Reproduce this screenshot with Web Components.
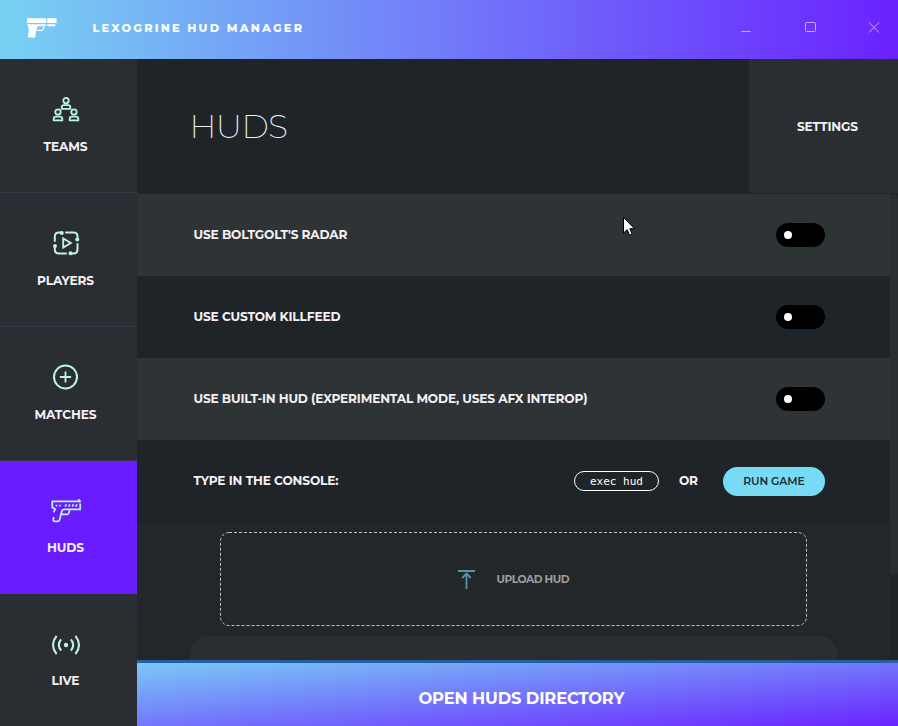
<!DOCTYPE html>
<html lang="en">
<head>
<meta charset="utf-8">
<title>Lexogrine HUD Manager</title>
<style>
body { margin: 0; background: #23272a; }
</style>
</head>
<body>
<hud-app></hud-app>
<script>
const define = (name, html, setup) => {
  const t = document.createElement('template');
  t.innerHTML = html;
  customElements.define(name, class extends HTMLElement {
    connectedCallback() {
      if (this.shadowRoot) return;
      this.attachShadow({ mode: 'open' }).appendChild(t.content.cloneNode(true));
      if (setup) setup(this, this.shadowRoot);
    }
  });
};

// A single-line label tracked so that its glyphs span the "span" attribute, in pixels.
define('ui-label', `
<style>
:host { display: inline-block; white-space: nowrap; flex: none; }
span { display: inline-block; }
</style><span><slot></slot></span>`, (el, root) => {
  const target = +el.getAttribute('span');
  const s = root.querySelector('span');
  const n = el.textContent.trim().length;
  const ls = (target - s.getBoundingClientRect().width) / (n - 1);
  s.style.letterSpacing = ls + 'px';
  s.style.marginRight = -ls + 'px';
});

const icons = {
  teams: `<svg width="28" height="27" viewBox="0 0 28 27"><g stroke-width="1.8" transform="translate(0 -.4)"><circle cx="14" cy="4" r="2.7"/><path d="M9.7 12.3v-1.4q0-2.3 2.3-2.3h4q2.3 0 2.3 2.3v1.4z"/><circle cx="6" cy="15.4" r="2.7"/><path d="M1.7 23.7v-1.4q0-2.3 2.3-2.3h4q2.3 0 2.3 2.3v1.4z"/><circle cx="22" cy="15.4" r="2.7"/><path d="M17.7 23.7v-1.4q0-2.3 2.3-2.3h4q2.3 0 2.3 2.3v1.4z"/></g></svg>`,
  players: `<svg width="28" height="27" viewBox="0 0 28 27"><g transform="translate(0 -.5)"><g stroke-width="2"><path d="M2.8 11.2V6.3q0-4.3 4.3-4.3h2"/><path d="M13.2 2h8.3q4 0 4 4v2.3"/><path d="M25.5 12.8v6q0 4.2-4.2 4.2h-1.8"/><path d="M14.8 23H7q-4.2 0-4.2-4.2V16"/><path d="M11.2 7.9v9.2l7.6-4.6z" stroke-width="1.9"/></g><g fill="#bdf5de" stroke="none"><circle cx="9.8" cy="2.4" r="2"/><circle cx="25.3" cy="9" r="2"/><circle cx="18.5" cy="22.8" r="2"/><circle cx="3" cy="15.5" r="2"/></g></g></svg>`,
  matches: `<svg width="28" height="27" viewBox="0 0 28 27"><g transform="translate(0 -.6)"><circle cx="13.5" cy="12.6" r="11.5" stroke-width="2"/><path d="M13.5 7v11.2M7.9 12.6h11.2" stroke-width="1.8"/></g></svg>`,
  huds: `<svg width="32" height="27" viewBox="0 0 32 27"><g transform="translate(0 -2)"><path d="M28.9 2v2.3H2.3v6.1l2.9 1.7-1.6 3.3" stroke-width="1.7"/><path d="M30.2 3.5v1M30.2 6.6v5.6M28.9 4.3h2" stroke-width="1.7"/><path d="M31 12.3H14.2q-2 0-2.4 2L9.6 22.8q-.4 1.6-2 1.6H5.1q-2.4 0-1.8-2.4l.6-2.1M11.8 17.3h5.4q1.1 0 1.5-1.1l1.2-3.9" stroke-width="1.7"/><path d="M5.6 8.6h1.7M9 8.6h1.7M15.2 9.7l1.2-2.3M18.7 9.7l1.2-2.3M22.2 9.7l1.2-2.3M25.7 9.7l1.2-2.3" stroke-width="1.7"/></g></svg>`,
  live: `<svg width="30" height="27" viewBox="0 0 30 27"><g stroke-width="2.1" transform="translate(0 -.4)"><path d="M5.6 4.3Q-1.6 13.4 5.6 22.5"/><path d="M10.1 7.8Q5.5 13.4 10.1 19"/><path d="M24.4 4.3q7.2 9.1 0 18.2"/><path d="M19.9 7.8q4.6 5.6 0 11.2"/></g><circle cx="15" cy="13" r="2.2" fill="#bdf5de" stroke="none"/></svg>`
};

define('title-bar', `
<style>
:host { display: flex; height: 59px; align-items: center; background: linear-gradient(to right, #78d2f3, #6a22ff); color: #fff; box-sizing: border-box; padding-left: 26px; }
.logo { width: 32px; height: 24px; margin-bottom: 1px; }
ui-label { margin: -3px 0 0 34.5px; font: 800 11.3px/16px Montserrat, Inter, sans-serif; color: #f6fbff; }
.win { margin-left: auto; padding-right: 18px; display: flex; gap: 52px; height: 12px; margin-bottom: 3px; }
.win svg { width: 12px; height: 12px; fill: none; stroke: #cfabff; stroke-width: 1; }
</style>
<svg class="logo" viewBox="0 0 32 24"><g fill="#fff"><path d="M1 1.3h.8l.5-.8 1.2.8h16.8v4.8H1zM21.3 1.3h8l.4-.6.8.9v4.5h-9.2zM1.2 7.2h19.1v1.3H1.2zM21.3 7.2h8.3l-.5 2h-7.8zM2 8.3h10l-1.8 6.1-1.2 6.4-7.4-.6 1.2-6z"/><path d="M11.4 8.8h7l-1.4 3.6-1 1h-4.6" fill="none" stroke="#fff" stroke-width="1.1"/></g></svg>
<ui-label span="209.5">LEXOGRINE HUD MANAGER</ui-label>
<div class="win">
<svg><path d="M1.5 9.5H10.5"/></svg>
<svg><rect x="1.5" y=".5" width="10" height="9" rx="1"/></svg>
<svg><path d="M1 .5l10 10M11 .5L1 10.5"/></svg>
</div>`);

define('nav-item', `
<style>
:host { display: block; box-sizing: border-box; height: 134px; padding-top: 38px; text-align: center; border-bottom: 1px solid #343943; color: #f3f1f5; background: #2a2e32; font: 700 12.2px/18px Montserrat, Inter, sans-serif; }
:host([active]) { background: #691cff; border-bottom: 0; height: 133px; }
:host(:last-child) { border: 0; height: 132px; }
.icon { height: 27px; display: flex; justify-content: center; padding-right: 6px; margin-bottom: 14px; }
:host([active]) .icon, :host(:last-child) .icon { margin-bottom: 13px; }
.name { padding-right: 6px; }
svg { fill: none; stroke: #bdf5de; overflow: visible; }
</style><div class="icon"></div><div class="name"><slot></slot></div>`,
(el, root) => { root.querySelector('.icon').innerHTML = icons[el.getAttribute('icon')]; });

define('page-header', `
<style>
:host { display: flex; height: 135px; color: #f1f0f3; background: #1f2428; font-family: Montserrat, Inter, sans-serif; flex: none; }
.heading { flex: 1; padding: 45px 0 0 52.5px; font: 200 33px/44px Montserrat, Inter, sans-serif; }
.action { box-sizing: border-box; width: 149px; background: #2a2e32; border-bottom: 1px solid #202529; padding: 59px 0 0 48px; font: 700 12.2px/18px Montserrat, Inter, sans-serif; }
</style>
<div class="heading"><slot></slot></div>
<div class="action"><ui-label span="61">SETTINGS</ui-label></div>`);

define('option-row', `
<style>
:host { display: flex; box-sizing: border-box; height: 82px; align-items: center; justify-content: space-between; padding: 0 65px 0 56.5px; background: #1f2428; color: #f3f1f5; font: 700 12.2px/18px Montserrat, Inter, sans-serif; flex: none; }
:host(:nth-of-type(odd)) { background: #2e3336; }
.end { display: flex; align-items: center; }
</style><slot></slot><div class="end"><slot name="end"></slot></div>`);

define('toggle-switch', `
<style>
:host { display: flex; box-sizing: border-box; width: 49px; height: 24px; border-radius: 12px; background: #000; align-items: center; padding-left: 8px; }
i { width: 8px; height: 8px; border-radius: 50%; background: #fff; }
</style><i></i>`);

define('console-command', `<style>
:host { display: block; box-sizing: border-box; width: 85px; height: 20px; border: 1px solid #fff; border-radius: 10px; text-align: center; font: 11px/19px "DejaVu Sans Mono", monospace; color: #fff; }
</style><slot></slot>`);

define('pill-button', `
<style>
:host { display: flex; width: 102px; height: 29px; border-radius: 15px; background: #78dbf5; color: #202b32; align-items: center; justify-content: center; font: 600 10.8px/16px Montserrat, Inter, sans-serif; margin-top: 1px; }
</style><slot></slot>`);

define('upload-area', `
<style>
:host { display: flex; box-sizing: border-box; width: 587px; height: 94px; margin: 10px 0 10px 83px; padding: 0 0 0 237px; align-items: center; color: #9c9da0; font: 700 10.7px/16px Montserrat, Inter, sans-serif; flex: none; position: relative; }
.frame { position: absolute; inset: 0; }
.frame rect { fill: none; stroke: #bdc0c3; stroke-dasharray: 3 2; }
.arrow { margin-right: 21.5px; flex: none; }
::slotted(ui-label) { padding-top: 1px; }
</style>
<svg class="frame" width="587" height="94"><rect x=".5" y=".5" width="586" height="93" rx="8.5"/></svg>
<svg class="arrow" width="18" height="20" fill="none" stroke="#5097ac" stroke-width="2"><path d="M1 2h17"/><path d="M9.5 20V5M5.2 9l4.3-4.4L13.8 9" stroke-width="1.8"/></svg>
<slot></slot>`);

define('hud-app', `
<style>
:host { display: flex; flex-direction: column; width: 898px; height: 726px; overflow: hidden; position: relative; background: #23272a; }
.body { display: flex; flex: 1; min-height: 0; }
nav { width: 137px; flex: none; }
main { flex: 1; display: flex; flex-direction: column; min-width: 0; }
.scroll { display: flex; height: 466px; overflow: hidden; flex: none; }
.content { width: 753px; display: flex; flex-direction: column; }
.track { width: 8px; background: #1f2428; }
.thumb { height: 381px; background: #2a2e32; border-radius: 4px; }
.card { height: 60px; margin-left: 53px; width: 647px; background: #2a2e32; border-radius: 17px; flex: none; }
.open { box-sizing: border-box; height: 67px; flex: none; border-top: 3px solid #265f9f; background: linear-gradient(to bottom right, #7ac9f7, #6a22ff) padding-box; color: #fff; display: flex; align-items: center; justify-content: center; font: 700 16.3px/24px Montserrat, Inter, sans-serif; padding: 6px 0 0 8px; }
.or { margin: 0 25px 0 20px; }
.cursor { position: absolute; left: 622px; top: 216px; }
</style>
<title-bar></title-bar>
<div class="body">
<nav>
<nav-item icon="teams"><ui-label span="44">TEAMS</ui-label></nav-item>
<nav-item icon="players"><ui-label span="57">PLAYERS</ui-label></nav-item>
<nav-item icon="matches"><ui-label span="62">MATCHES</ui-label></nav-item>
<nav-item icon="huds" active><ui-label span="37">HUDS</ui-label></nav-item>
<nav-item icon="live"><ui-label span="28">LIVE</ui-label></nav-item>
</nav>
<main>
<page-header><ui-label span="98.5">HUDS</ui-label></page-header>
<div class="scroll">
<div class="content">
<option-row><ui-label span="154">USE BOLTGOLT'S RADAR</ui-label><toggle-switch slot="end"></toggle-switch></option-row>
<option-row><ui-label span="147">USE CUSTOM KILLFEED</ui-label><toggle-switch slot="end"></toggle-switch></option-row>
<option-row><ui-label span="394">USE BUILT-IN HUD (EXPERIMENTAL MODE, USES AFX INTEROP)</ui-label><toggle-switch slot="end"></toggle-switch></option-row>
<option-row><ui-label span="145">TYPE IN THE CONSOLE:</ui-label><console-command slot="end">exec hud</console-command><ui-label class="or" slot="end" span="19">OR</ui-label><pill-button slot="end"><ui-label span="61.5">RUN GAME</ui-label></pill-button></option-row>
<upload-area><ui-label span="73">UPLOAD HUD</ui-label></upload-area>
<div class="card"></div>
</div>
<div class="track"><div class="thumb"></div></div>
</div>
<div class="open"><ui-label span="206">OPEN HUDS DIRECTORY</ui-label></div>
</main>
</div>
<svg class="cursor" width="14" height="21" viewBox="0 0 14 21"><path d="M1.5 1.5v15.6l3.7-3.5 2.4 5.6 2.6-1.1-2.4-5.4h4.7z" fill="#fff" stroke="#000"/></svg>
`);
</script>
</body>
</html>
